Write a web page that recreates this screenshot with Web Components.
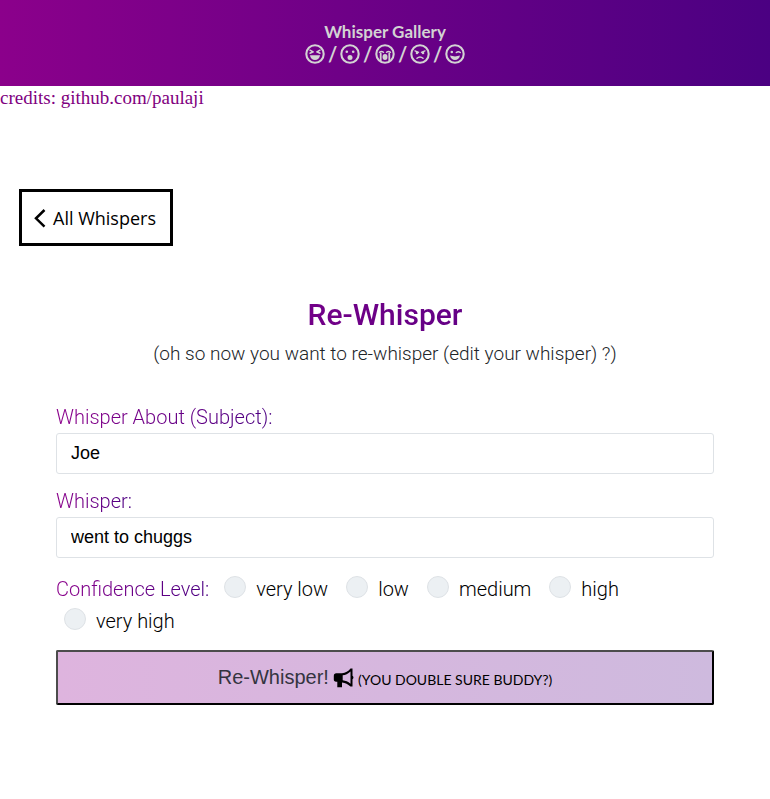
<!DOCTYPE html>
<html lang="en">
<head>
<meta charset="utf-8">
<title>Whisper Gallery</title>
<style>
  body { margin: 0; background: #fff; color: #000; }
</style>
</head>
<body>
<whisper-page></whisper-page>
<script>
const UI = '"Roboto", "Liberation Sans", sans-serif';
const HUMAN = '"Open Sans", "Noto Sans", sans-serif';
const INK = 'linear-gradient(to right, #8b008b, #4b0082)';

function define(name, html) {
  const template = document.createElement('template');
  template.innerHTML = html;
  customElements.define(name, class extends HTMLElement {
    constructor() {
      super();
      this.attachShadow({ mode: 'open' }).append(template.content.cloneNode(true));
    }
  });
}

const FACES = {
  laugh: '<path d="M5 6.2 8.2 7.8 5 9.2M15 6.2 11.8 7.8 15 9.2" stroke-width="1.5"/><path class="f" d="M5 11.3h10c-.3 3-2.400 4.700-5 4.700s-4.700-1.700-5-4.700z"/>',
  surprise: '<circle class="f" cx="6.800" cy="7.800" r="1.300"/><circle class="f" cx="13.200" cy="7.800" r="1.300"/><circle class="f" cx="10" cy="13.400" r="2.500"/>',
  cry: '<path d="M4.500 8.300q2-1.600 4 0M11.500 8.300q2-1.600 4 0" stroke-width="1.400"/><path d="M5.700 9.500v7.500M14.300 9.500v7.500" stroke-width="1.800"/><ellipse class="f" cx="10" cy="13" rx="2.500" ry="3"/>',
  angry: '<path d="M5 6.800 8.600 8.300M15 6.800 11.400 8.300" stroke-width="1.300"/><circle class="f" cx="7" cy="9" r="1.300"/><circle class="f" cx="13" cy="9" r="1.300"/><path d="M7 14.300q3-2.600 6 0" stroke-width="1.500"/>',
  wink: '<circle class="f" cx="6.800" cy="8" r="1.300"/><path d="M11.300 8.500q2-1.700 4 0" stroke-width="1.400"/><path class="f" d="M5 11.600q5 1.600 10 0-1 4.400-5 4.400t-5-4.400z"/>'
};

customElements.define('whisper-face', class extends HTMLElement {
  connectedCallback() {
    const root = this.attachShadow({ mode: 'open' });
    root.innerHTML = `<style>
      :host { display: block; width: 20px; height: 20px; }
      svg { display: block; width: 100%; height: 100%; fill: none; stroke: currentColor; stroke-linecap: round; stroke-linejoin: round; }
      .f { fill: currentColor; stroke: none; }
    </style><svg viewBox="0 0 20 20" aria-hidden="true"><circle cx="10" cy="10" r="8.700" stroke-width="2.100"/>${FACES[this.getAttribute('mood')]}</svg>`;
  }
});

define('whisper-header', `<style>
  :host { display: block; background: ${INK}; color: #d3d3d3; padding: 21px 0; font-family: Lato, sans-serif; }
  h1 { margin: 0; font-size: 17px; line-height: 22px; font-weight: 700; text-align: center; }
  .faces { display: flex; justify-content: center; align-items: center; gap: 3px; height: 22px; }
  .faces span { width: 9px; text-align: center; font-size: 20px; line-height: 22px; font-weight: 700; }
</style>
<h1>Whisper Gallery</h1>
<div class="faces"><whisper-face mood="laugh"></whisper-face><span>/</span><whisper-face mood="surprise"></whisper-face><span>/</span><whisper-face mood="cry"></whisper-face><span>/</span><whisper-face mood="angry"></whisper-face><span>/</span><whisper-face mood="wink"></whisper-face></div>`);

define('whisper-credits', `<style>
  :host { display: block; font: 19px/24px "Liberation Serif", serif; color: #800080; }
  a { color: inherit; text-decoration: none; }
</style><a href="https://github.com/paulaji">credits: github.com/paulaji</a>`);

define('back-link', `<style>
  :host { display: flex; font-family: ${HUMAN}; }
  a { display: flex; align-items: center; gap: 7px; padding: 14px 14px 12px 12px; border: 3px solid #000; color: #000; text-decoration: none; font-size: 18px; line-height: 25px; }
  svg { width: 12px; height: 20px; fill: none; stroke: currentColor; stroke-width: 2.500; }
</style><a href="#all"><svg viewBox="0 0 12 20" aria-hidden="true"><path d="M10.500 1 2 9.300l8.500 8.300"/></svg><slot></slot></a>`);

customElements.define('whisper-field', class extends HTMLElement {
  connectedCallback() {
    const root = this.attachShadow({ mode: 'open' });
    root.innerHTML = `<style>
      :host { display: flex; flex-direction: column; align-items: flex-start; font-family: ${UI}; }
      label { font-size: 20px; line-height: 32px; font-weight: 300; background: ${INK}; background-clip: text; -webkit-background-clip: text; color: transparent; }
      input { box-sizing: border-box; width: 100%; height: 41px; margin: 0; padding: 0 14px; border: 1px solid #dee2e6; border-radius: 3px; background: #fff; color: #000; font: 18px "Liberation Sans", sans-serif; }
    </style><label for="box"></label><input id="box" type="text">`;
    root.querySelector('label').textContent = this.getAttribute('label');
    root.querySelector('input').value = this.getAttribute('value');
  }
});

define('confidence-level', `<style>
  :host { display: block; font-family: ${UI}; font-weight: 300; font-size: 20px; line-height: 32px; }
  fieldset { display: flex; flex-wrap: wrap; margin: 0; padding: 0; border: 0; min-width: 0; }
  .name { margin-right: 7px; background: ${INK}; background-clip: text; -webkit-background-clip: text; color: transparent; }
  label { display: flex; padding: 0 10px 0 8px; color: #000; }
  input { appearance: none; box-sizing: border-box; width: 22px; height: 22px; margin: 3px 10px 0 0; border: 1px solid #dee2e6; border-radius: 50%; background: #ecf0f3; }
  input:checked { background: #8b008b; }
</style>
<fieldset aria-labelledby="name"><span class="name" id="name">Confidence Level:</span>
<label><input type="radio" name="level">very low</label>
<label><input type="radio" name="level">low</label>
<label><input type="radio" name="level">medium</label>
<label><input type="radio" name="level">high</label>
<label><input type="radio" name="level">very high</label></fieldset>`);

define('whisper-submit', `<style>
  :host { display: block; }
  button { display: flex; justify-content: center; align-items: center; gap: 4px; width: 100%; height: 55px; margin: 0; padding: 0; border: 2px solid #000; border-top-color: #4c4c4c; border-left-color: #4c4c4c; border-radius: 2px; background: linear-gradient(to right, #deb4de, #cebade); color: #343440; font: 20px "Liberation Sans", sans-serif; }
  svg { width: 21px; height: 20px; fill: #000; }
  small { color: #000; font: 14px Lato, sans-serif; padding-top: 3px; }
</style>
<button type="submit"><span>Re-Whisper!</span><svg viewBox="0 0 21 20" aria-hidden="true"><path fill-rule="evenodd" d="M19.500.5v7.200c1.300.6 1.300 3 0 3.600v7.200h-2c-2.800-2.300-5-3.700-8.500-4.100V19.300H4.300V13.700H3c-1.400 0-2.200-.9-2.200-2.200V8c0-1.700.9-2.700 2.500-2.700H9c3.500-.3 6.200-1.900 8.500-4.800zM17.500 3.500C15 5.800 12.500 7 9.700 7.300v5c2.900.3 5.400 1.400 7.800 3.500z"/></svg><small><slot></slot></small></button>`);

define('whisper-form', `<style>
  :host { display: block; font-family: ${UI}; }
  h2 { margin: 0; font-size: 30px; line-height: 40px; font-weight: 500; text-align: center; background: ${INK}; background-clip: text; -webkit-background-clip: text; color: transparent; }
  p { margin: 3px 0 31px; font-size: 19px; line-height: 32px; font-weight: 300; text-align: center; color: #212529; }
  form { display: flex; flex-direction: column; }
  whisper-field { margin-bottom: 11px; }
  confidence-level { margin: 4px 0 13px; }
</style>
<h2>Re-Whisper</h2>
<p>(oh so now you want to re-whisper (edit your whisper) ?)</p>
<form>
  <whisper-field label="Whisper About (Subject):" value="Joe"></whisper-field>
  <whisper-field label="Whisper:" value="went to chuggs"></whisper-field>
  <confidence-level></confidence-level>
  <whisper-submit>(YOU DOUBLE SURE BUDDY?)</whisper-submit>
</form>`);

define('whisper-page', `<style>
  :host { display: block; }
  back-link { margin: 79px 19px 0; }
  whisper-form { margin: 49px 56px 94px; }
</style>
<whisper-header></whisper-header>
<whisper-credits></whisper-credits>
<back-link>All Whispers</back-link>
<whisper-form></whisper-form>`);
</script>
</body>
</html>
